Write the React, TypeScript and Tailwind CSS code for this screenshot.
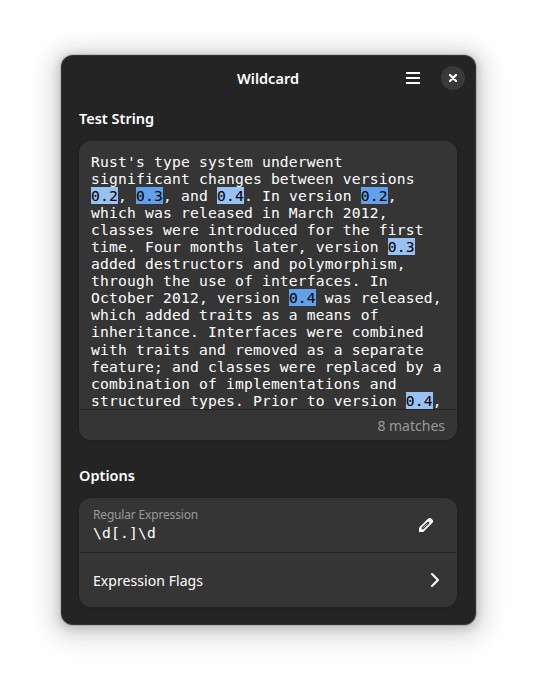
import type { ReactNode } from "react";

function Light({ children }: { children: ReactNode }) {
  return <span className="bg-[#99c1f1] text-black">{children}</span>;
}

function Dark({ children }: { children: ReactNode }) {
  return <span className="bg-[#62a0ea] text-black">{children}</span>;
}

function Header() {
  return (
    <header className="flex h-[46px] items-center pr-[11px] pl-[69px]">
      <h1 className="flex-1 text-center text-[14.5px] font-semibold leading-5">Wildcard</h1>
      <button className="mr-[21px] text-white" aria-label="Menu">
        <svg width="14" height="12" viewBox="0 0 14 12" fill="currentColor" shapeRendering="crispEdges">
          <path d="M0 0h14v2H0zM0 5h14v2H0zM0 10h14v2H0z" />
        </svg>
      </button>
      <button className="grid size-6 place-items-center rounded-full bg-[#3a3a3a] text-white" aria-label="Close">
        <svg width="8" height="8" viewBox="0 0 8 8" fill="none" stroke="currentColor" strokeWidth="2.3" strokeLinecap="round">
          <path d="M1 1l6 6M7 1L1 7" />
        </svg>
      </button>
    </header>
  );
}

function TestString() {
  return (
    <div className="flex h-[299px] flex-col overflow-hidden rounded-xl bg-[#353535] shadow-[0_1px_3px_1px_rgba(0,0,0,0.1)]">
      <div className="h-[268px] overflow-hidden whitespace-pre px-3 pt-3 font-['DejaVu_Sans_Mono',monospace] text-[14.667px] leading-[17.047px] tracking-[0.17px]">
        {"Rust's type system underwent\nsignificant changes between versions\n"}
        <Light>0.2</Light>, <Dark>0.3</Dark>, and <Light>0.4</Light>. In version <Dark>0.2</Dark>
        {",\nwhich was released in March 2012,\nclasses were introduced for the first\ntime. Four months later, version "}
        <Light>0.3</Light>
        {"\nadded destructors and polymorphism,\nthrough the use of interfaces. In\nOctober 2012, version "}
        <Dark>0.4</Dark>
        {" was released,\nwhich added traits as a means of\ninheritance. Interfaces were combined\nwith traits and removed as a separate\nfeature; and classes were replaced by a\ncombination of implementations and\nstructured types. Prior to version "}
        <Light>0.4</Light>,
      </div>
      <div className="flex flex-1 items-center justify-end border-t border-[#222222] pt-px pr-3 text-[14px] text-[#9a9a9a]">
        8 matches
      </div>
    </div>
  );
}

function Options() {
  return (
    <div className="flex h-[109px] flex-col rounded-xl bg-[#353535] shadow-[0_1px_3px_1px_rgba(0,0,0,0.1)]">
      <div className="flex h-[55px] items-center border-b border-[#222222] pr-6 pl-3.5">
        <div className="flex-1">
          <div className="text-[12px] leading-4 tracking-[-0.17px] text-[#9a9a9a]">Regular Expression</div>
          <div className="font-['DejaVu_Sans_Mono',monospace] text-[14.667px] leading-5 tracking-[0.17px]">{"\\d[.]\\d"}</div>
        </div>
        <svg width="14" height="14" viewBox="0 0 14 14" fill="none" stroke="#fff">
          <path d="M0 9.8V14h4.2l9.2-9.2a2.1 2.1 0 0 0 0-3L12.2.6a2.1 2.1 0 0 0-3 0z" fill="#fff" stroke="none" />
          <path d="M3.8 10.2l5.4-5.4" stroke="#353535" strokeWidth="2.6" strokeLinecap="round" />
          <path d="M4.6 9.4l3.8-3.8" strokeWidth="0.7" strokeLinecap="round" />
        </svg>
      </div>
      <div className="flex flex-1 items-center pr-[18px] pl-3.5">
        <span className="flex-1 text-[14px] tracking-[0.06px]">Expression Flags</span>
        <svg width="8" height="14" viewBox="0 0 8 14" fill="none" stroke="#fff" strokeWidth="2" strokeLinecap="round" strokeLinejoin="round">
          <path d="M1 1l6 6-6 6" />
        </svg>
      </div>
    </div>
  );
}

export default function App() {
  return (
    <main className="h-[692px] w-[537px] overflow-hidden bg-white pt-[55px] pl-[61px] font-['Noto_Sans',sans-serif] text-white">
      <section className="h-[570px] w-[415px] rounded-xl bg-[#242424] shadow-[0_0_0_1px_rgba(0,0,0,0.12),0_2px_8px_2px_rgba(0,0,0,0.13),0_3px_20px_8px_rgba(0,0,0,0.12),0_6px_32px_16px_rgba(0,0,0,0.04),inset_0_0_0_1px_rgba(255,255,255,0.07)]">
        <Header />
        <div className="pr-[19px] pl-[18px]">
          <h2 className="mb-[13px] pt-[7px] text-[14.5px] font-semibold leading-5">Test String</h2>
          <TestString />
          <h2 className="mt-[25px] mb-[13px] text-[14.5px] font-semibold leading-5">Options</h2>
          <Options />
        </div>
      </section>
    </main>
  );
}
